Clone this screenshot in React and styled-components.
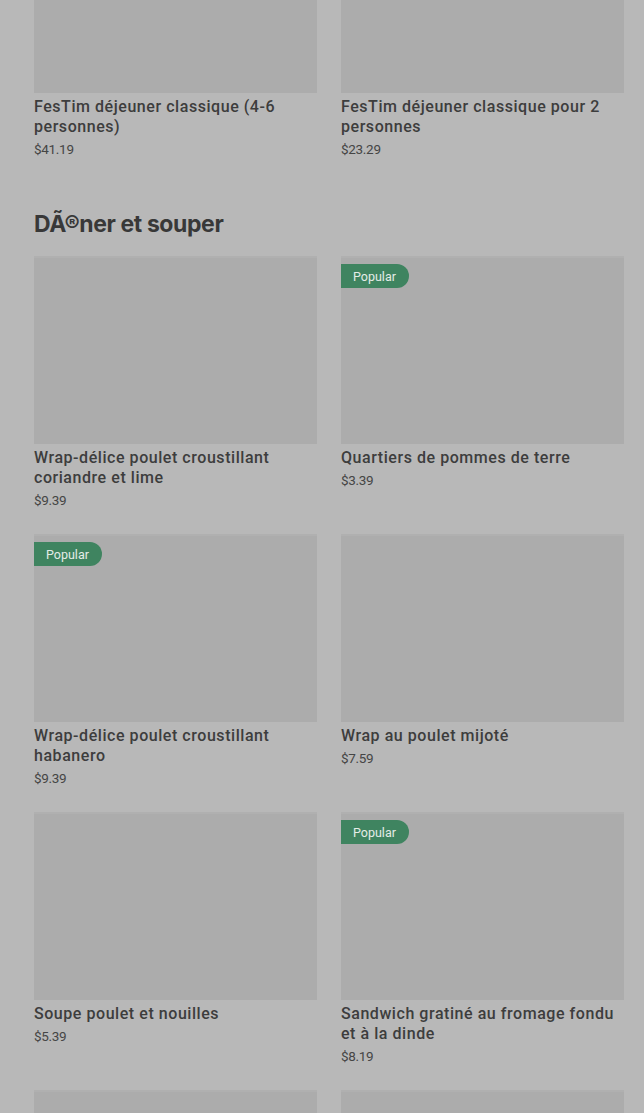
import { styled, createGlobalStyle } from "styled-components";

const GlobalStyle = createGlobalStyle`
  html, body {
    margin: 0;
    padding: 0;
    background: #b8b8b8;
  }
  body {
    font-family: Roboto, "Liberation Sans", sans-serif;
    color: #3b3b3b;
    overflow: hidden;
  }
`;

const Page = styled.main`
  /* the view is scrolled part way into the menu */
  margin-top: -95px;
  padding: 0 20px 0 34px;
`;

const Section = styled.section`
  & + & {
    margin-top: 49px;
  }
`;

const Heading = styled.h2`
  margin: 0 0 16px;
  font-family: Inter, "Open Sans", sans-serif;
  font-size: 23px;
  line-height: 32px;
  font-weight: 700;
  letter-spacing: -0.4px;
  color: #383838;
`;

const Grid = styled.div`
  display: grid;
  grid-template-columns: 283px 283px;
  column-gap: 24px;
  row-gap: 24px;
`;

const Card = styled.article`
  display: flex;
  flex-direction: column;
`;

const Picture = styled.div`
  position: relative;
  height: 188px;
  background: #acacac;
  border-top: 2px solid #b0b0b0;
  box-sizing: border-box;
`;

const Badge = styled.span`
  position: absolute;
  top: 6px;
  left: 0;
  height: 24px;
  padding: 0 13px 0 12px;
  display: flex;
  align-items: center;
  background: #3f8460;
  color: #e4ece7;
  font-size: 12.5px;
  border-radius: 0 12px 12px 0;
`;

const Title = styled.h3`
  margin: 4px 0 0;
  font-size: 16px;
  line-height: 20px;
  font-weight: 500;
  letter-spacing: 0.55px;
  color: #3d3d3d;
`;

const Price = styled.p`
  margin: 2px 0 0;
  font-size: 13.5px;
  line-height: 20px;
  color: #454545;
  letter-spacing: -0.3px;
`;

const breakfast = [
  { name: "FesTim déjeuner classique (4-6 personnes)", price: "$41.19" },
  { name: "FesTim déjeuner classique pour 2 personnes", price: "$23.29" },
];

const dinner = [
  { name: "Wrap-délice poulet croustillant coriandre et lime", price: "$9.39" },
  { name: "Quartiers de pommes de terre", price: "$3.39", popular: true },
  { name: "Wrap-délice poulet croustillant habanero", price: "$9.39", popular: true },
  { name: "Wrap au poulet mijoté", price: "$7.59" },
  { name: "Soupe poulet et nouilles", price: "$5.39" },
  { name: "Sandwich gratiné au fromage fondu et à la dinde", price: "$8.19", popular: true },
  { name: "", price: "" },
  { name: "", price: "" },
];

function Item({ item }) {
  return (
    <Card>
      <Picture>{item.popular && <Badge>Popular</Badge>}</Picture>
      {item.name && <Title>{item.name}</Title>}
      {item.price && <Price>{item.price}</Price>}
    </Card>
  );
}

export default function App() {
  return (
    <>
      <GlobalStyle />
      <Page>
        <Section>
          <Grid>
            {breakfast.map((item, i) => (
              <Item key={i} item={item} />
            ))}
          </Grid>
        </Section>
        <Section>
          <Heading>DÃ®ner et souper</Heading>
          <Grid>
            {dinner.map((item, i) => (
              <Item key={i} item={item} />
            ))}
          </Grid>
        </Section>
      </Page>
    </>
  );
}
